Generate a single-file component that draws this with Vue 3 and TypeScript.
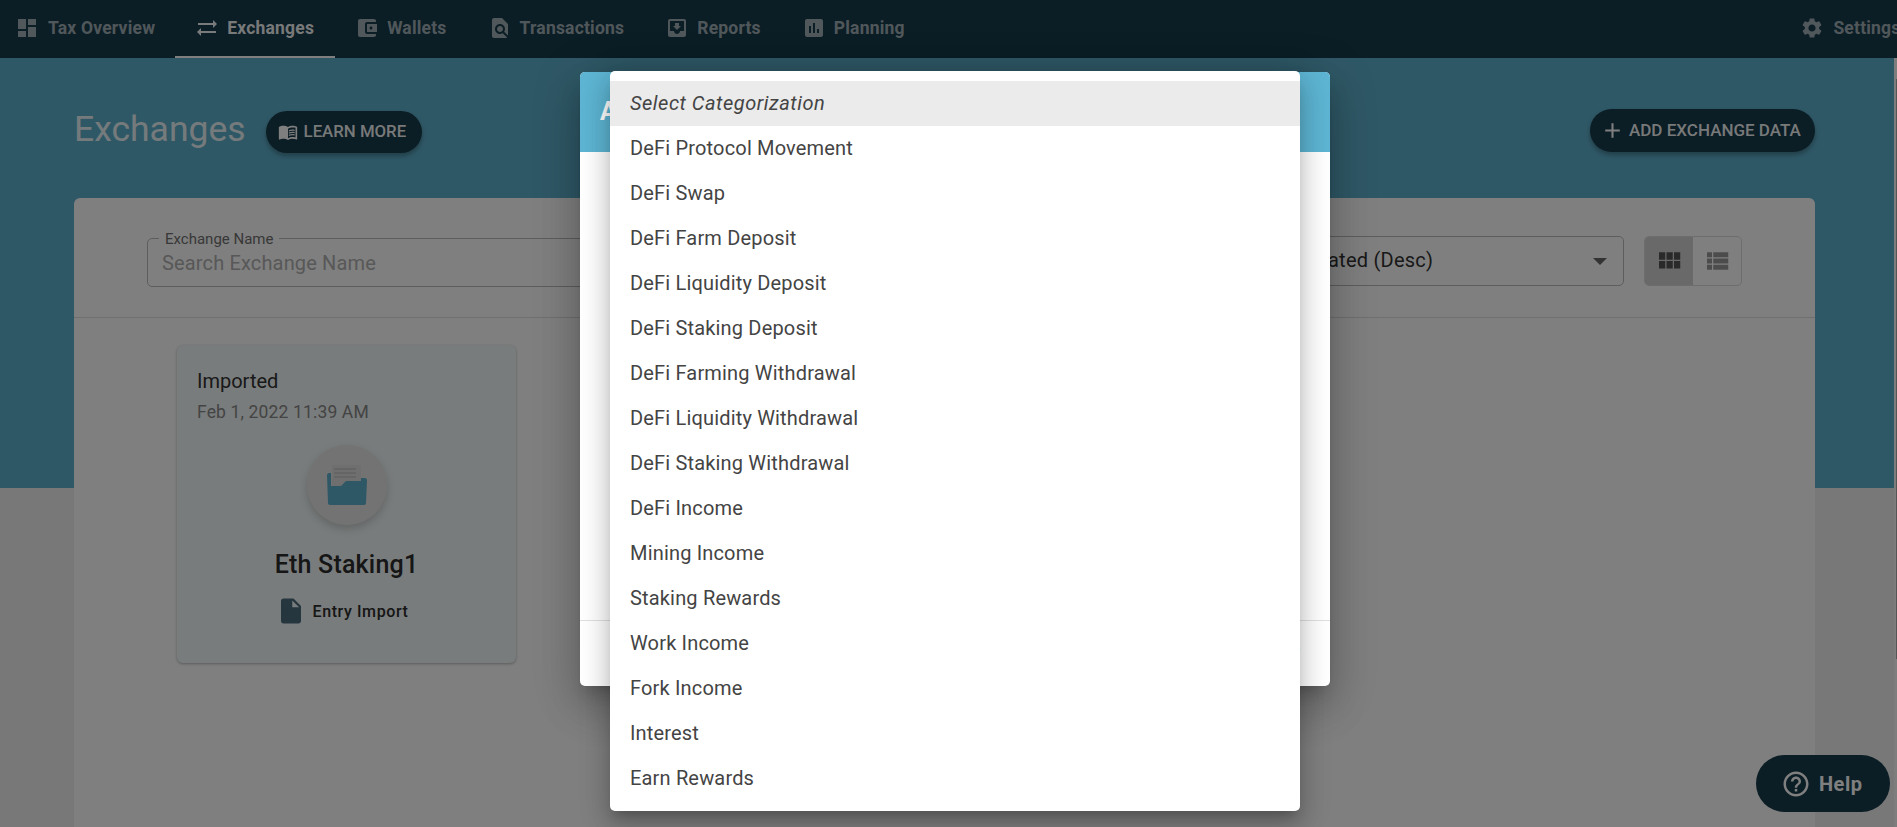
<script setup lang="ts">
interface NavItem {
  label: string;
  path: string;
  active?: boolean;
}

const navItems: NavItem[] = [
  { label: 'Tax Overview', path: 'M3 13h8V3H3v10zm0 8h8v-6H3v6zm10 0h8V11h-8v10zm0-18v6h8V3h-8z' },
  { label: 'Exchanges', path: 'M22 8l-4-4v3H3v2h15v3zM2 16l4 4v-3h15v-2H6v-3z', active: true },
  { label: 'Wallets', path: 'M21 18v1c0 1.1-.9 2-2 2H5c-1.11 0-2-.9-2-2V5c0-1.1.89-2 2-2h14c1.1 0 2 .9 2 2v1h-9c-1.11 0-2 .9-2 2v8c0 1.1.89 2 2 2h9zm-9-2h10V8H12v8zm4-2.5c-.83 0-1.5-.67-1.5-1.5s.67-1.5 1.5-1.5 1.5.67 1.5 1.5-.67 1.5-1.5 1.5z' },
  { label: 'Transactions', path: 'M20 19.59V8l-6-6H6c-1.1 0-1.99.9-1.99 2L4 20c0 1.1.89 2 1.99 2H18c.45 0 .85-.15 1.19-.4l-4.43-4.43c-.8.52-1.74.83-2.76.83-2.76 0-5-2.24-5-5s2.24-5 5-5 5 2.24 5 5c0 1.02-.31 1.96-.83 2.75L20 19.59zM9 13c0 1.66 1.34 3 3 3s3-1.34 3-3-1.34-3-3-3-3 1.34-3 3z' },
  { label: 'Reports', path: 'M19 3H4.99c-1.11 0-1.98.89-1.98 2L3 19c0 1.1.88 2 1.99 2H19c1.1 0 2-.9 2-2V5c0-1.11-.9-2-2-2zm0 12h-4c0 1.66-1.35 3-3 3s-3-1.34-3-3H4.99V5H19v10zm-3-5h-2V7h-4v3H8l4 4 4-4z' },
  { label: 'Planning', path: 'M19 3H5c-1.1 0-2 .9-2 2v14c0 1.1.9 2 2 2h14c1.1 0 2-.9 2-2V5c0-1.1-.9-2-2-2zM9 17H7v-7h2v7zm4 0h-2V7h2v10zm4 0h-2v-4h2v4z' },
];

const gearPath = 'M19.14 12.94c.04-.3.06-.61.06-.94 0-.32-.02-.64-.07-.94l2.03-1.58c.18-.14.23-.41.12-.61l-1.92-3.32c-.12-.22-.37-.29-.59-.22l-2.39.96c-.5-.38-1.03-.7-1.62-.94l-.36-2.54c-.04-.24-.24-.41-.48-.41h-3.84c-.24 0-.43.17-.47.41l-.36 2.54c-.59.24-1.13.57-1.62.94l-2.39-.96c-.22-.08-.47 0-.59.22L2.74 8.87c-.12.21-.08.47.12.61l2.03 1.58c-.05.3-.09.63-.09.94s.02.64.07.94l-2.03 1.58c-.18.14-.23.41-.12.61l1.92 3.32c.12.22.37.29.59.22l2.39-.96c.5.38 1.03.7 1.62.94l.36 2.54c.05.24.24.41.48.41h3.84c.24 0 .44-.17.47-.41l.36-2.54c.59-.24 1.13-.56 1.62-.94l2.39.96c.22.08.47 0 .59-.22l1.92-3.32c.12-.22.07-.47-.12-.61l-2.01-1.58zM12 15.6c-1.98 0-3.6-1.62-3.6-3.6s1.62-3.6 3.6-3.6 3.6 1.62 3.6 3.6-1.62 3.6-3.6 3.6z';

const categories: string[] = [
  'DeFi Protocol Movement',
  'DeFi Swap',
  'DeFi Farm Deposit',
  'DeFi Liquidity Deposit',
  'DeFi Staking Deposit',
  'DeFi Farming Withdrawal',
  'DeFi Liquidity Withdrawal',
  'DeFi Staking Withdrawal',
  'DeFi Income',
  'Mining Income',
  'Staking Rewards',
  'Work Income',
  'Fork Income',
  'Interest',
  'Earn Rewards',
];
</script>

<template>
  <div class="app">
    <nav class="nav">
      <a v-for="item in navItems" :key="item.label" class="nav-item" :class="{ active: item.active }">
        <svg viewBox="0 0 24 24" class="nav-icon"><path :d="item.path" /></svg>
        <span>{{ item.label }}</span>
      </a>
      <a class="nav-item settings">
        <svg viewBox="0 0 24 24" class="nav-icon"><path :d="gearPath" /></svg>
        <span>Settings</span>
      </a>
    </nav>

    <div class="below-nav">
      <main class="content">
        <header class="page-head">
          <h1>Exchanges</h1>
          <button class="pill learn">
            <svg viewBox="0 0 24 24" class="learn-icon">
              <path d="M21 5c-1.11-.35-2.33-.5-3.5-.5-1.95 0-4.05.4-5.5 1.5-1.45-1.1-3.55-1.5-5.5-1.5S2.45 4.9 1 6v14.65c0 .25.25.5.5.5.1 0 .15-.05.25-.05C3.1 20.45 5.05 20 6.5 20c1.95 0 4.05.4 5.5 1.5 1.35-.85 3.8-1.5 5.5-1.5 1.65 0 3.35.3 4.75 1.05.1.05.15.05.25.05.25 0 .5-.25.5-.5V6c-.6-.45-1.25-.75-2-1zm0 13.5c-1.1-.35-2.3-.5-3.5-.5-1.7 0-4.15.65-5.5 1.5V8c1.35-.85 3.8-1.5 5.5-1.5 1.2 0 2.4.15 3.5.5v11.5z" />
              <path d="M17.5 10.5c.88 0 1.73.09 2.5.26V9.24c-.79-.15-1.64-.24-2.5-.24-1.7 0-3.24.29-4.5.83v1.66c1.13-.64 2.7-.99 4.5-.99zM13 12.49v1.66c1.13-.64 2.7-.99 4.5-.99.88 0 1.73.09 2.5.26V11.9c-.79-.15-1.64-.24-2.5-.24-1.7 0-3.24.3-4.5.83zM17.5 14.33c-1.7 0-3.24.29-4.5.83v1.66c1.13-.64 2.7-.99 4.5-.99.88 0 1.73.09 2.5.26v-1.52c-.79-.16-1.64-.24-2.5-.24z" />
            </svg>
            <span>LEARN MORE</span>
          </button>
          <button class="pill add">
            <svg viewBox="0 0 24 24" class="add-icon"><path d="M19 13h-6v6h-2v-6H5v-2h6V5h2v6h6v2z" /></svg>
            <span>ADD EXCHANGE DATA</span>
          </button>
        </header>

        <section class="panel">
          <div class="filters">
            <div class="field search">
              <label>Exchange Name</label>
              <span class="placeholder">Search Exchange Name</span>
            </div>
            <div class="field sort">
              <span>Last Updated (Desc)</span>
              <i class="caret"></i>
            </div>
            <div class="toggle">
              <span class="toggle-btn on">
                <svg viewBox="0 0 24 24"><path d="M4 11h5V5H4v6zm0 7h5v-6H4v6zm6 0h5v-6h-5v6zm6 0h5v-6h-5v6zm-6-7h5V5h-5v6zm6-6v6h5V5h-5z" /></svg>
              </span>
              <span class="toggle-btn">
                <svg viewBox="0 0 24 24"><path d="M4 14h4v-4H4v4zm0 5h4v-4H4v4zM4 9h4V5H4v4zm5 5h12v-4H9v4zm0 5h12v-4H9v4zM9 5v4h12V5H9z" /></svg>
              </span>
            </div>
          </div>

          <div class="cards">
            <article class="card">
              <div class="card-status">Imported</div>
              <div class="card-date">Feb 1, 2022 11:39 AM</div>
              <div class="avatar">
                <svg viewBox="0 0 42 40" class="folder">
                  <rect x="6" y="0" width="29" height="26" fill="#dedede" />
                  <path d="M8 4h22M8 8h22M8 12h22" stroke="#c4c4c4" stroke-width="1.400" />
                  <path d="M1 10c0-1 1-2 2-2h2v13h10l5-5h15v-3h4c1 0 2 1 2 2l-1 23c0 1-1 2-2 2H4c-1 0-2-1-2-2z" fill="#5eb0cc" />
                </svg>
              </div>
              <div class="card-name">Eth Staking1</div>
              <div class="card-type">
                <svg viewBox="0 0 24 24"><path d="M6 2c-1.100 0-1.990.9-1.990 2L4 20c0 1.100.89 2 1.990 2H18c1.100 0 2-.9 2-2V8l-6-6H6zm7 7V3.500L18.500 9H13z" /></svg>
                <span>Entry Import</span>
              </div>
            </article>
          </div>
        </section>
      </main>
      <div class="scrollbar"><i></i></div>
    </div>

    <button class="help">
      <svg viewBox="0 0 24 24"><path d="M11 18h2v-2h-2v2zm1-16C6.480 2 2 6.480 2 12s4.480 10 10 10 10-4.480 10-10S17.520 2 12 2zm0 18c-4.410 0-8-3.590-8-8s3.590-8 8-8 8 3.590 8 8-3.590 8-8 8zm0-14c-2.210 0-4 1.790-4 4h2c0-1.100.9-2 2-2s2 .9 2 2c0 2-3 1.750-3 5h2c0-2.250 3-2.500 3-5 0-2.210-1.790-4-4-4z" /></svg>
      Help
    </button>

    <div class="backdrop"></div>

    <div class="modal">
      <div class="modal-head">Add Entry</div>
      <div class="modal-body"></div>
      <div class="modal-foot"><span>SAVE</span></div>
    </div>

    <ul class="menu">
      <li class="selected">Select Categorization</li>
      <li v-for="cat in categories" :key="cat">{{ cat }}</li>
    </ul>
  </div>
</template>

<style scoped>
.app {
  position: relative;
  width: 1897px;
  height: 827px;
  overflow: hidden;
  font-family: Roboto, "Liberation Sans", sans-serif;
  background: #f0f0f0;
}

.nav {
  display: flex;
  width: 1921px;
  height: 58px;
  background: #163a4a;
}

.nav-item {
  display: flex;
  align-items: center;
  gap: 8px;
  height: 58px;
  padding: 0 20.500px 2px;
  box-sizing: border-box;
  font-size: 17.500px;
  font-weight: 700;
  letter-spacing: 0.2px;
  color: rgba(255, 255, 255, 0.6);
  flex-shrink: 0;
}

.nav-item:first-child {
  padding-left: 15px;
  gap: 9px;
}

.nav-item.active {
  margin-left: -1px;
  color: rgba(255, 255, 255, 0.95);
  border-bottom: 2px solid #fff;
  padding-bottom: 0;
}

.nav-item.settings {
  margin-left: auto;
  gap: 9px;
}

.nav-icon {
  width: 24px;
  height: 24px;
  fill: currentColor;
}

.below-nav {
  display: flex;
  height: 769px;
}

.content {
  flex: 1;
  min-width: 0;
  padding: 0 79px 0 74px;
  background: linear-gradient(#5eb0cc 430px, #f0f0f0 430px);
}

.page-head {
  display: flex;
  align-items: flex-start;
  height: 44px;
  margin-top: 51px;
  margin-bottom: 45px;
}

.page-head h1 {
  margin: 0 20px 0 0;
  font-size: 35.500px;
  font-weight: 400;
  line-height: 40px;
  color: rgba(255, 255, 255, 0.9);
}

.pill {
  display: flex;
  align-items: center;
  border: 0;
  border-radius: 22px;
  background: #163a4a;
  color: rgba(255, 255, 255, 0.95);
  font-family: inherit;
  font-size: 17px;
  font-weight: 500;
  box-shadow: 0 3px 5px rgba(0, 0, 0, 0.3);
}

.learn {
  width: 156px;
  height: 42px;
  padding: 0 0 0 12px;
  gap: 6px;
  margin-top: 2px;
  font-size: 16.800px;
}

.learn span {
  margin-top: -2px;
}

.learn-icon {
  width: 20px;
  height: 20px;
  fill: #fff;
}

.add {
  width: 225px;
  height: 43px;
  margin-left: auto;
  padding: 0 0 0 10px;
  gap: 4px;
}

.add span {
  margin-top: -2px;
}

.add-icon {
  width: 25px;
  height: 25px;
  fill: #fff;
}

.panel {
  background: #fff;
  border-radius: 6px 6px 0 0;
  height: 640px;
}

.filters {
  display: flex;
  gap: 20px;
  height: 120px;
  box-sizing: border-box;
  padding: 38px 73px 0;
  border-bottom: 1px solid #dedede;
}

.field {
  height: 50px;
  box-sizing: border-box;
  border: 1px solid #bbb;
  border-radius: 5px;
  margin: 0;
}

.search {
  flex: 1;
  position: relative;
  min-width: 0;
  height: 49px;
  margin-top: 2px;
  padding: 0 14px;
}

.search label {
  position: absolute;
  left: 11px;
  top: -8px;
  padding: 0 6px;
  background: #fff;
  font-size: 15px;
  line-height: 16px;
  color: #707070;
}

.placeholder {
  display: block;
  font-size: 20px;
  letter-spacing: 0.15px;
  color: #b0b0b0;
  line-height: 48px;
}

.sort {
  display: flex;
  align-items: center;
  justify-content: space-between;
  width: 392px;
  padding: 0 16px 2px 14px;
  font-size: 20px;
  letter-spacing: 0.25px;
  color: #333;
}

.caret {
  width: 0;
  height: 0;
  margin-top: 2px;
  border-left: 7px solid transparent;
  border-right: 7px solid transparent;
  border-top: 7px solid #666;
}

.toggle {
  display: flex;
  height: 50px;
  box-sizing: border-box;
  border: 1px solid #dadada;
  border-radius: 5px;
  overflow: hidden;
}

.toggle-btn {
  display: flex;
  align-items: center;
  justify-content: center;
  width: 48px;
  fill: #999;
}

.toggle-btn.on {
  background: #d2d2d2;
  fill: #555;
}

.toggle-btn svg {
  width: 30px;
  height: 30px;
}

.cards {
  padding: 27px 0 0 103px;
}

.card {
  width: 339px;
  height: 318px;
  box-sizing: border-box;
  padding: 24px 20px 0;
  border-radius: 6px;
  background: #f2f8f8;
  box-shadow: 0 1px 3px rgba(0, 0, 0, 0.3);
}

.card-status {
  font-size: 20px;
  line-height: 24px;
  color: #333;
}

.card-date {
  margin-top: 7px;
  font-size: 17.500px;
  letter-spacing: 0.15px;
  line-height: 24px;
  color: #888;
}

.avatar {
  display: flex;
  align-items: center;
  justify-content: center;
  width: 80px;
  height: 80px;
  margin: 21px auto 0;
  border-radius: 50%;
  background: #e6e6e6;
  box-shadow: 0 4px 8px rgba(0, 0, 0, 0.18);
}

.folder {
  width: 42px;
  height: 40px;
}

.card-name {
  margin-top: 24px;
  text-align: center;
  font-size: 25px;
  font-weight: 500;
  letter-spacing: 0.2px;
  line-height: 32px;
  color: #2c2c2c;
}

.card-type {
  display: flex;
  align-items: center;
  justify-content: center;
  gap: 7px;
  margin-top: 15px;
  padding-right: 9px;
  font-size: 16px;
  font-weight: 500;
  letter-spacing: 0.6px;
  color: #2c2c2c;
}

.card-type svg {
  width: 30px;
  height: 30px;
  fill: #4a6c7e;
}

.scrollbar {
  width: 3px;
  background: #fafafa;
  display: flex;
  justify-content: flex-end;
}

.scrollbar i {
  display: block;
  width: 1px;
  height: 580px;
  margin-top: 21px;
  background: #aaa;
}

.help {
  position: absolute;
  left: 1756px;
  top: 755px;
  display: flex;
  align-items: center;
  gap: 8px;
  width: 134px;
  height: 57px;
  padding: 0 0 0 27px;
  border: 0;
  border-radius: 29px;
  background: #163a4a;
  color: #fff;
  font-family: inherit;
  font-size: 20px;
  font-weight: 700;
  letter-spacing: 0.5px;
}

.help svg {
  width: 30px;
  height: 30px;
  margin-left: -2px;
  fill: #fff;
}

.backdrop {
  position: absolute;
  inset: 0;
  background: rgba(0, 0, 0, 0.5);
}

.modal {
  position: absolute;
  left: 580px;
  top: 72px;
  display: flex;
  flex-direction: column;
  width: 750px;
  height: 614px;
  border-radius: 5px;
  overflow: hidden;
  background: #fff;
  box-shadow: 0 11px 15px -7px rgba(0, 0, 0, 0.2), 0 24px 38px 3px rgba(0, 0, 0, 0.14), 0 9px 46px 8px rgba(0, 0, 0, 0.12);
}

.modal-head {
  height: 80px;
  padding-left: 20px;
  background: #5db5d3;
  color: #fff;
  font-size: 25px;
  font-weight: 700;
  line-height: 80px;
}

.modal-body {
  flex: 1;
}

.modal-foot {
  display: flex;
  justify-content: flex-end;
  align-items: center;
  height: 65px;
  padding-right: 30px;
  border-top: 1px solid #e0e0e0;
  color: #5db5d3;
  font-size: 17px;
  font-weight: 500;
}

.menu {
  position: absolute;
  left: 610px;
  top: 71px;
  width: 690px;
  margin: 0;
  padding: 10px 0;
  list-style: none;
  border-radius: 5px;
  background: #fff;
  box-shadow: 0 8px 10px -5px rgba(0, 0, 0, 0.2), 0 16px 24px 2px rgba(0, 0, 0, 0.14), 0 6px 30px 5px rgba(0, 0, 0, 0.12);
}

.menu li {
  height: 45px;
  padding: 0 20px;
  font-size: 20px;
  letter-spacing: 0.17px;
  line-height: 45px;
  color: #444;
}

.menu li.selected {
  background: #ebebeb;
  font-style: italic;
  letter-spacing: 0.52px;
}
</style>
